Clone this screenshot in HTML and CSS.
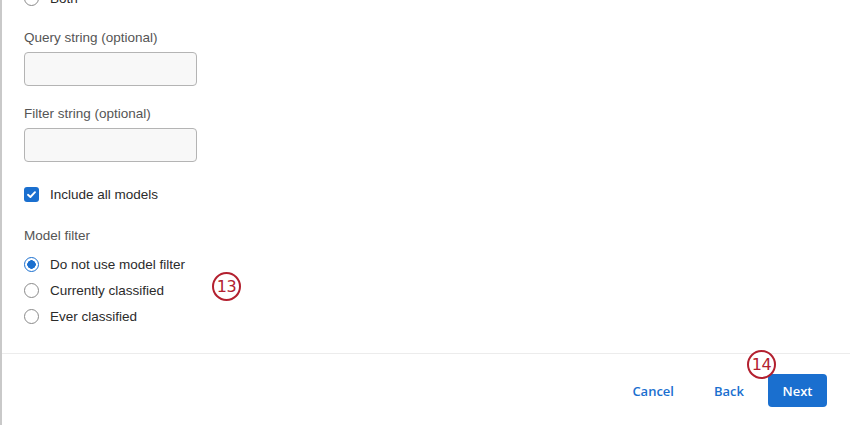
FILE: index.html
```html
<!DOCTYPE html>
<html lang="en">
<head>
<meta charset="utf-8">
<link rel="stylesheet" href="styles.css">
</head>
<body>
<div class="panel">
  <div class="content">
    <div class="opt opt-first"><span class="radio"></span><span class="opt-text">Both</span></div>

    <div class="label label-query">Query string (optional)</div>
    <div class="input"></div>

    <div class="label label-filter">Filter string (optional)</div>
    <div class="input"></div>

    <div class="opt opt-check">
      <span class="checkbox"><svg viewBox="0 0 15 15" width="15" height="15"><path d="M4 7.8 L6.4 10 L11 5.2" fill="none" stroke="#fff" stroke-width="1.9" stroke-linecap="round" stroke-linejoin="round"/></svg></span>
      <span class="opt-text">Include all models</span>
    </div>

    <div class="label label-model">Model filter</div>
    <div class="radios">
      <div class="opt"><span class="radio radio-on"></span><span class="opt-text">Do not use model filter</span></div>
      <div class="opt"><span class="radio"></span><span class="opt-text">Currently classified</span></div>
      <div class="opt"><span class="radio"></span><span class="opt-text">Ever classified</span></div>
    </div>
    <span class="marker marker-13">13</span>
  </div>
  <div class="footer">
    <span class="btn btn-link btn-cancel">Cancel</span>
    <span class="btn btn-link btn-back">Back</span>
    <span class="btn btn-primary">Next</span>
    <span class="marker marker-14">14</span>
  </div>
</div>
</body>
</html>
```

FILE: styles.css
```css
html, body {
  margin: 0;
  padding: 0;
  background: #ffffff;
}
body {
  width: 850px;
  height: 425px;
  overflow: hidden;
  font-family: "Liberation Sans", Arial, sans-serif;
}
.panel {
  position: relative;
  height: 425px;
  border-left: 2px solid #c9c9c9;
  display: flex;
  flex-direction: column;
  box-sizing: border-box;
}
.content {
  height: 353px;
  padding-left: 22px;
  box-sizing: border-box;
}
.opt {
  display: flex;
  align-items: center;
  height: 26px;
  gap: 11px;
}
.opt-first {
  margin-top: -15px;
}
.opt-text {
  font-size: 13.5px;
  color: #2b2b2b;
}
.radio {
  width: 15px;
  height: 15px;
  border: 1px solid #8a8a8a;
  border-radius: 50%;
  box-sizing: border-box;
  background: #fff;
  flex: none;
}
.radio-on {
  border: 1.5px solid #1a6fcf;
  background: radial-gradient(circle, #1a6fcf 0 4px, #fff 4.5px);
}
.checkbox {
  width: 15px;
  height: 15px;
  border-radius: 3px;
  background: #1a6fcf;
  flex: none;
  display: flex;
}
.label {
  font-size: 13.5px;
  line-height: 18px;
  color: #555555;
}
.label-query { margin-top: 18px; }
.label-filter { margin-top: 19px; }
.label-model { margin-top: 20px; }
.input {
  width: 173px;
  height: 34px;
  margin-top: 5px;
  border: 1px solid #b4b4b4;
  border-radius: 4px;
  background: #f8f8f8;
  box-sizing: border-box;
}
.opt-check { margin-top: 19px; }
.radios { margin-top: 6px; }

.footer {
  height: 72px;
  border-top: 1px solid #ececec;
  display: flex;
  align-items: center;
  justify-content: flex-end;
  padding-right: 23px;
  box-sizing: border-box;
  padding-top: 2px;
}
.btn {
  font-family: "Open Sans", "Liberation Sans", sans-serif;
  font-size: 13px;
  font-weight: 600;
  height: 33px;
  display: flex;
  align-items: center;
  border-radius: 4px;
  box-sizing: border-box;
}
.btn-link {
  color: #1a6fcf;
}
.btn-cancel { margin-right: 40px; }
.btn-back { margin-right: 24px; }
.btn-primary {
  background: #1a6fcf;
  color: #fff;
  width: 59px;
  justify-content: center;
}

.marker {
  position: absolute;
  width: 29px;
  height: 29px;
  border: 2.5px solid #b3202f;
  border-radius: 50%;
  box-sizing: border-box;
  color: #b3202f;
  font-family: "DejaVu Sans", sans-serif;
  font-size: 16px;
  display: flex;
  align-items: center;
  justify-content: center;
  background: #fff;
  letter-spacing: -0.5px;
}
.marker-13 { left: 210px; top: 272px; }
.marker-14 { left: 745px; top: 350px; }
```
